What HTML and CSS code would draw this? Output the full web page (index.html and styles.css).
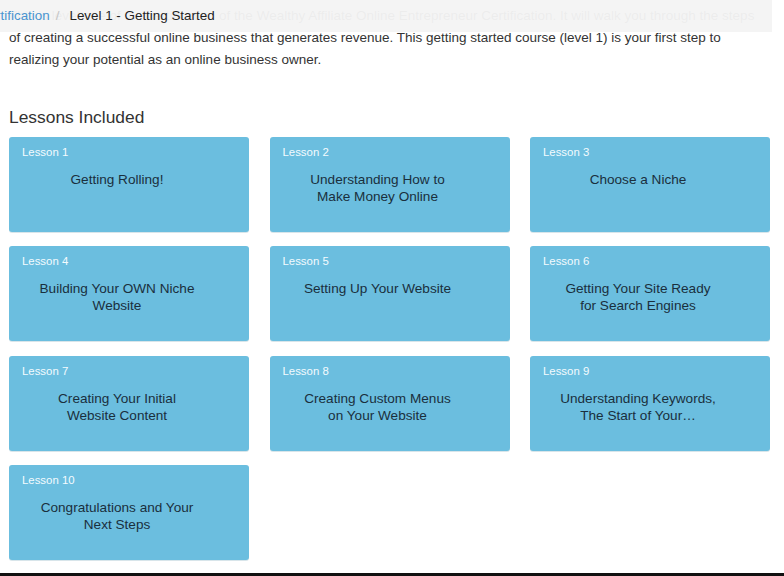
FILE: index.html
```html
<!DOCTYPE html>
<html lang="en">
<head>
<meta charset="utf-8">
<title>Level 1 - Getting Started</title>
<link rel="stylesheet" href="styles.css">
</head>
<body>
<nav class="crumbs">
  <a class="crumb-link" href="#">Certification</a><span class="crumb-sep">/</span><span class="crumb-current">Level 1 - Getting Started</span>
</nav>
<main class="main">
  <p class="intro">This is level one of the certification of the Wealthy Affiliate Online Entrepreneur Certification. It will walk you through the steps of creating a successful online business that generates revenue. This getting started course (level 1) is your first step to realizing your potential as an online business owner.</p>
  <h2 class="section-title">Lessons Included</h2>
  <div class="lessons">
    <div class="lesson"><div class="lesson-num">Lesson 1</div><div class="lesson-title">Getting Rolling!</div></div>
    <div class="lesson"><div class="lesson-num">Lesson 2</div><div class="lesson-title">Understanding How to Make Money Online</div></div>
    <div class="lesson"><div class="lesson-num">Lesson 3</div><div class="lesson-title">Choose a Niche</div></div>
    <div class="lesson"><div class="lesson-num">Lesson 4</div><div class="lesson-title">Building Your OWN Niche Website</div></div>
    <div class="lesson"><div class="lesson-num">Lesson 5</div><div class="lesson-title">Setting Up Your Website</div></div>
    <div class="lesson"><div class="lesson-num">Lesson 6</div><div class="lesson-title">Getting Your Site Ready for Search Engines</div></div>
    <div class="lesson"><div class="lesson-num">Lesson 7</div><div class="lesson-title">Creating Your Initial Website Content</div></div>
    <div class="lesson"><div class="lesson-num">Lesson 8</div><div class="lesson-title">Creating Custom Menus on Your Website</div></div>
    <div class="lesson"><div class="lesson-num">Lesson 9</div><div class="lesson-title">Understanding Keywords, The Start of Your…</div></div>
    <div class="lesson"><div class="lesson-num">Lesson 10</div><div class="lesson-title">Congratulations and Your Next Steps</div></div>
  </div>
</main>
<div class="bottom-rule"></div>
</body>
</html>
```

FILE: styles.css
```css
html, body {
  margin: 0;
  padding: 0;
  background: #ffffff;
  overflow: hidden;
}

body {
  font-family: "Liberation Sans", Arial, sans-serif;
  color: #333333;
  position: relative;
}

.crumbs {
  position: absolute;
  top: 0;
  left: 0;
  width: 772px;
  height: 32px;
  background: rgba(244, 244, 244, 0.96);
  font-size: 13.4px;
  line-height: 32px;
  white-space: nowrap;
  overflow: hidden;
  display: flex;
  align-items: center;
}

.crumb-link {
  color: #4a94d0;
  text-decoration: none;
  margin-left: -21px;
}

.crumb-sep {
  color: #c4c4c4;
  padding: 0 10px 0 6px;
}

.crumb-current {
  color: #222222;
}

.main {
  padding: 5px 15px 0 9px;
}

.intro {
  margin: 0;
  width: 760px;
  font-size: 13.5px;
  line-height: 22px;
  color: #333333;
}

.section-title {
  margin: 35px 0 9px;
  font-size: 17.4px;
  line-height: 22px;
  font-weight: normal;
  color: #333333;
}

.lessons {
  display: grid;
  grid-template-columns: repeat(3, 240px);
  grid-auto-rows: 95px;
  column-gap: 20.5px;
  row-gap: 14.3px;
}

.lesson {
  background: #6bbedf;
  border-radius: 3px;
  box-shadow: 0 1px 0 rgba(40, 110, 140, 0.18);
  padding: 8px 13px;
}

.lesson-num {
  font-size: 11.4px;
  line-height: 14px;
  color: #f4fbfe;
}

.lesson-title {
  margin: 12px 39px 0 15px;
  font-size: 13.6px;
  line-height: 17px;
  text-align: center;
  color: #1a2f3d;
}

.bottom-rule {
  margin-top: 13px;
  height: 3px;
  background: #111111;
}
```
